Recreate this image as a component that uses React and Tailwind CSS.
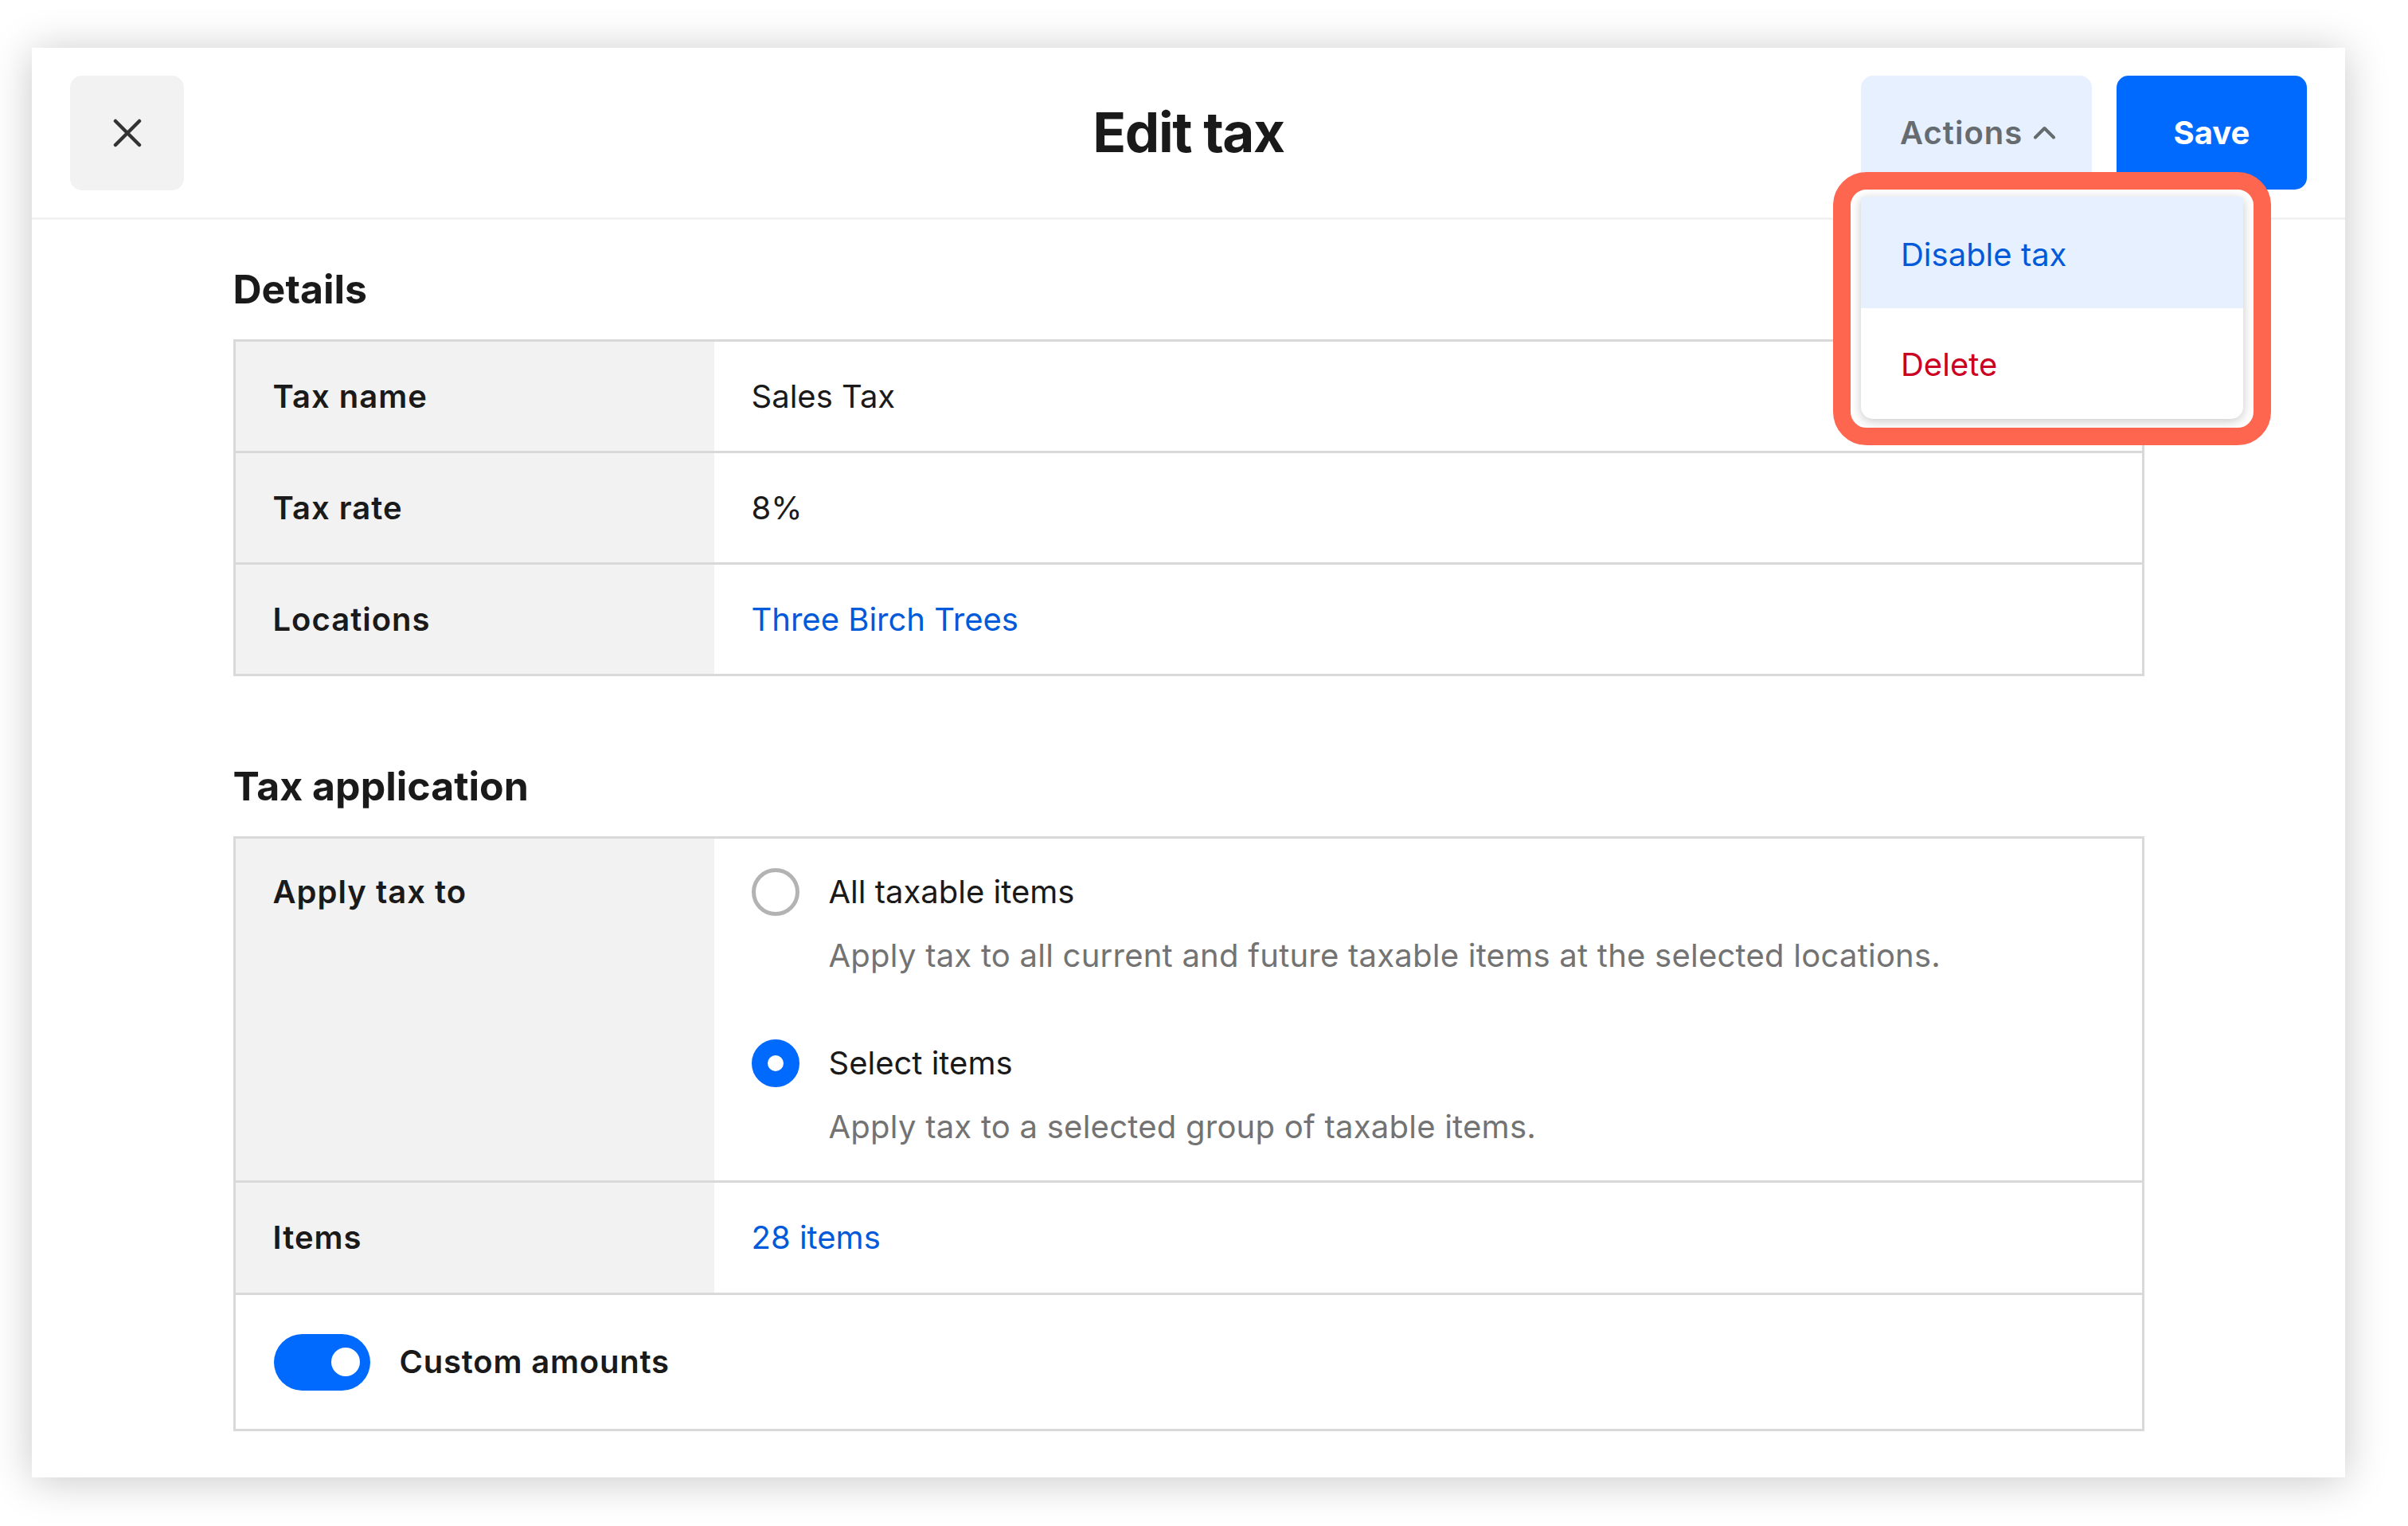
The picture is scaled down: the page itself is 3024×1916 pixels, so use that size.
const rowBorder = "border-[#d9d9d9]";

function Radio({ checked }) {
  return checked ? (
    <span className="block w-[60px] h-[60px] rounded-full border-[20px] border-[#006aff] bg-white" />
  ) : (
    <span className="block w-[60px] h-[60px] rounded-full border-[5px] border-[#b3b3b3] bg-white" />
  );
}

function Option({ checked, title, text, className }) {
  return (
    <div className={"grid grid-cols-[60px_1fr] gap-x-[37px] " + className}>
      <div className="flex items-center h-[60px]">
        <Radio checked={checked} />
      </div>
      <div className="leading-[60px]">{title}</div>
      <div />
      <div className="mt-[20px] leading-[60px] text-[#737373] tracking-[0.006em]">{text}</div>
    </div>
  );
}

function DetailRow({ label, children, first, h = "h-[137px]" }) {
  return (
    <div className={"flex " + (first ? "" : "border-t-[3px] " + rowBorder)}>
      <div className={h + " w-[601px] bg-[#f2f2f2] px-[47px] flex items-center font-semibold tracking-[0.025em]"}>
        {label}
      </div>
      <div className={h + " flex-1 px-[47px] flex items-center"}>{children}</div>
    </div>
  );
}

export default function App() {
  return (
    <div className="w-[3024px] h-[1916px] bg-white pt-[60px] pl-[40px] overflow-hidden font-[family-name:Inter,sans-serif] text-[40px] text-[#1a1a1a]">
      <div className="relative w-[2905px] h-[1795px] bg-white shadow-[0_4px_50px_rgba(0,0,0,0.22)]">
        {/* header */}
        <header className="grid grid-cols-[1fr_auto_1fr] items-center h-[216px] px-[48px] border-b-[3px] border-[#f2f2f2]">
          <div>
            <button className="w-[143px] h-[144px] rounded-[15px] bg-[#f2f2f2] flex items-center justify-center">
              <svg width="36" height="36" viewBox="0 0 36 36" fill="none">
                <path d="M3 3L33 33M33 3L3 33" stroke="#333333" strokeWidth="4.5" strokeLinecap="round" />
              </svg>
            </button>
          </div>
          <h1 className="text-[69px] font-bold tracking-[-0.02em] leading-none">Edit tax</h1>
          <div className="flex justify-end gap-[31px]">
            <button className="h-[143px] w-[290px] rounded-[15px] bg-[#e6f0ff] flex items-center pl-[49px] gap-[13px] font-semibold tracking-[0.025em] text-[#666b70]">
              <span>Actions</span>
              <svg width="29" height="17" viewBox="0 0 29 17" fill="none">
                <path d="M3 14.5L14.5 3L26 14.5" stroke="#666b70" strokeWidth="4" strokeLinecap="round" strokeLinejoin="round" />
              </svg>
            </button>
            <button className="h-[143px] w-[239px] rounded-[15px] bg-[#006aff] text-white font-bold">
              Save
            </button>
          </div>
        </header>

        {/* content */}
        <div className="w-[2400px] mx-auto pt-[57px]">
          <h2 className="text-[50px] font-bold leading-[60px] mb-[33px]">Details</h2>
          <div className={"border-[3px] " + rowBorder}>
            <DetailRow first label="Tax name">Sales Tax</DetailRow>
            <DetailRow label="Tax rate">8%</DetailRow>
            <DetailRow label="Locations">
              <span className="text-[#005ad9]">Three Birch Trees</span>
            </DetailRow>
          </div>

          <h2 className="mt-[108px] text-[50px] font-bold leading-[60px] mb-[33px]">Tax application</h2>
          <div className={"border-[3px] " + rowBorder}>
            <div className="flex">
              <div className="w-[601px] bg-[#f2f2f2] px-[47px] pt-[37px] leading-[60px] font-semibold tracking-[0.025em]">
                Apply tax to
              </div>
              <div className="flex-1 px-[47px] pt-[37px] pb-[37px]">
                <Option
                  title="All taxable items"
                  text="Apply tax to all current and future taxable items at the selected locations."
                />
                <Option
                  checked
                  className="mt-[75px]"
                  title="Select items"
                  text="Apply tax to a selected group of taxable items."
                />
              </div>
            </div>
            <DetailRow label="Items" h="h-[138px]">
              <span className="text-[#005ad9]">28 items</span>
            </DetailRow>
            <div className={"flex items-center gap-[37px] px-[48px] h-[171px] border-t-[3px] " + rowBorder}>
              <span className="w-[121px] h-[71px] rounded-full bg-[#006aff] flex items-center justify-end pr-[13px]">
                <span className="w-[36px] h-[36px] rounded-full bg-white" />
              </span>
              <span className="font-semibold tracking-[0.02em]">Custom amounts</span>
            </div>
          </div>
        </div>

        {/* open actions menu, with highlight ring */}
        <div className="absolute top-[156px] right-[93px] w-[550px] h-[343px] rounded-[42px] border-[22px] border-[#ff6650] bg-white pt-[9px] px-[13px]">
          <div className="w-[480px] rounded-t-[3px] rounded-b-[15px] bg-white overflow-hidden shadow-[0_3px_14px_rgba(0,0,0,0.22)]">
            <div className="h-[140px] bg-[#e6f0ff] flex items-center pl-[50px] pt-[6px] text-[#005ad9]">Disable tax</div>
            <div className="h-[139px] flex items-center pl-[50px] pt-[3px] text-[#cc0023]">Delete</div>
          </div>
        </div>
      </div>
    </div>
  );
}
